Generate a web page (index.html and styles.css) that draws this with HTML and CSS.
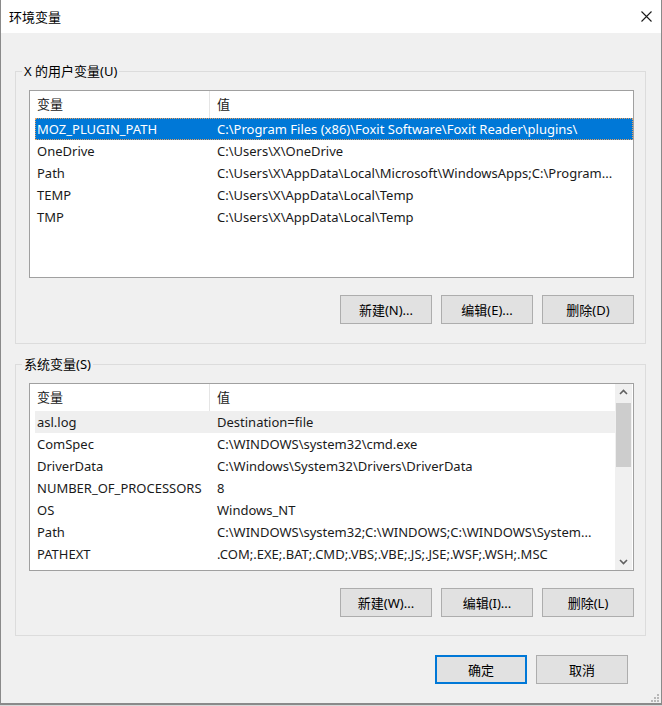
FILE: index.html
```html
<!DOCTYPE html>
<html lang="zh-CN">
<head>
<meta charset="utf-8">
<title>环境变量</title>
<link rel="stylesheet" href="styles.css">
</head>
<body>
<div class="window">
  <div class="titlebar">
    <span class="title">环境变量</span>
    <svg class="close" width="11" height="11" viewBox="0 0 11 11"><path d="M0.5 0.5 L10.5 10.5 M10.5 0.5 L0.5 10.5" stroke="#1a1a1a" stroke-width="1.1" fill="none"/></svg>
  </div>
  <div class="content">
    <fieldset class="group">
      <legend>X 的用户变量(U)</legend>
      <div class="list">
        <div class="header"><div class="hcell c1">变量</div><div class="hcell c2">值</div></div>
        <div class="rows">
          <div class="row selected"><div class="cell c1">MOZ_PLUGIN_PATH</div><div class="cell c2">C:\Program Files (x86)\Foxit Software\Foxit Reader\plugins\</div></div>
          <div class="row"><div class="cell c1">OneDrive</div><div class="cell c2">C:\Users\X\OneDrive</div></div>
          <div class="row"><div class="cell c1">Path</div><div class="cell c2">C:\Users\X\AppData\Local\Microsoft\WindowsApps;C:\Program...</div></div>
          <div class="row"><div class="cell c1">TEMP</div><div class="cell c2">C:\Users\X\AppData\Local\Temp</div></div>
          <div class="row"><div class="cell c1">TMP</div><div class="cell c2">C:\Users\X\AppData\Local\Temp</div></div>
        </div>
      </div>
      <div class="btnrow">
        <button class="btn">新建(N)...</button>
        <button class="btn">编辑(E)...</button>
        <button class="btn">删除(D)</button>
      </div>
    </fieldset>

    <fieldset class="group second">
      <legend>系统变量(S)</legend>
      <div class="list scrolling">
        <div class="listmain">
          <div class="header"><div class="hcell c1">变量</div><div class="hcell c2">值</div></div>
          <div class="rows">
            <div class="row hover"><div class="cell c1">asl.log</div><div class="cell c2">Destination=file</div></div>
            <div class="row"><div class="cell c1">ComSpec</div><div class="cell c2">C:\WINDOWS\system32\cmd.exe</div></div>
            <div class="row"><div class="cell c1">DriverData</div><div class="cell c2">C:\Windows\System32\Drivers\DriverData</div></div>
            <div class="row"><div class="cell c1">NUMBER_OF_PROCESSORS</div><div class="cell c2">8</div></div>
            <div class="row"><div class="cell c1">OS</div><div class="cell c2">Windows_NT</div></div>
            <div class="row"><div class="cell c1">Path</div><div class="cell c2">C:\WINDOWS\system32;C:\WINDOWS;C:\WINDOWS\System...</div></div>
            <div class="row"><div class="cell c1">PATHEXT</div><div class="cell c2">.COM;.EXE;.BAT;.CMD;.VBS;.VBE;.JS;.JSE;.WSF;.WSH;.MSC</div></div>
          </div>
        </div>
        <div class="scrollbar">
          <svg class="arrow" width="17" height="17" viewBox="0 0 17 17"><path d="M5 10 L8.5 6.5 L12 10" stroke="#606060" stroke-width="1.6" fill="none"/></svg>
          <div class="track"><div class="thumb"></div></div>
          <svg class="arrow" width="17" height="17" viewBox="0 0 17 17"><path d="M5 7 L8.5 10.5 L12 7" stroke="#606060" stroke-width="1.6" fill="none"/></svg>
        </div>
      </div>
      <div class="btnrow">
        <button class="btn">新建(W)...</button>
        <button class="btn">编辑(I)...</button>
        <button class="btn">删除(L)</button>
      </div>
    </fieldset>

    <div class="dialogbtns">
      <button class="btn default">确定</button>
      <button class="btn">取消</button>
    </div>
  </div>
  <svg class="grip" width="10" height="10" viewBox="0 0 10 10">
    <rect x="8" y="2" width="2" height="2" fill="#b8b8b8"/>
    <rect x="5" y="5" width="2" height="2" fill="#b8b8b8"/>
    <rect x="8" y="5" width="2" height="2" fill="#b8b8b8"/>
    <rect x="2" y="8" width="2" height="2" fill="#b8b8b8"/>
    <rect x="5" y="8" width="2" height="2" fill="#b8b8b8"/>
    <rect x="8" y="8" width="2" height="2" fill="#b8b8b8"/>
  </svg>
</div>
</body>
</html>
```

FILE: styles.css
```css
* { box-sizing: border-box; }
html, body { margin: 0; padding: 0; }
body {
  width: 662px;
  height: 706px;
  background: #d9d9d9;
  font-family: "Noto Sans", "Noto Sans CJK SC", sans-serif;
  font-size: 13px;
  color: #000;
  overflow: hidden;
}
.window {
  position: relative;
  width: 662px;
  height: 705px;
  background: #f0f0f0;
  border: 1px solid #8a8a8a;
  border-top: none;
  border-bottom-width: 2px;
}
.titlebar {
  height: 33px;
  background: #fff;
  display: flex;
  align-items: center;
  justify-content: space-between;
  padding: 0 9px 0 8px;
}
.title {
  font-size: 13px;
  font-family: "Noto Sans CJK SC", sans-serif;
  color: #000;
}
.close { display: block; }
.content {
  padding: 30px 0 0 14px;
}
.group {
  margin: 0;
  width: 631px;
  border: 1px solid #dcdcdc;
  padding: 11px 11px 19px 6px;
}
.group.second {
  margin-top: 12px;
  padding-bottom: 18px;
}
.group legend {
  padding: 0 2px;
  line-height: 16px;
  font-size: 13px;
}
.list {
  margin-left: 7px;
  height: 188px;
  background: #fff;
  border: 1px solid #a0a0a0;
}
.list.scrolling {
  display: flex;
}
.listmain {
  flex: 1;
  min-width: 0;
}
.header {
  height: 27px;
  display: flex;
  padding-left: 5px;
}
.hcell {
  line-height: 27px;
  color: #1a1a1a;
}
.hcell.c1 {
  width: 175px;
  padding-left: 2px;
  border-right: 1px solid #e5e5e5;
}
.hcell.c2 {
  padding-left: 7px;
}
.rows {
  padding-left: 5px;
}
.row {
  height: 22px;
  line-height: 23px;
  display: flex;
  white-space: nowrap;
  color: #1a1a1a;
}
.cell { overflow: hidden; }
.cell.c1 {
  width: 180px;
  flex: none;
  padding-left: 2px;
}
.cell.c2 {
  flex: 1;
  padding-left: 2px;
}
.row.selected {
  background: #0078d7;
  color: #fff;
  outline: 1px dotted #e8a060;
  outline-offset: -1px;
}
.row.hover {
  background: #efefef;
}
.scrollbar {
  width: 17px;
  flex: none;
  display: flex;
  flex-direction: column;
  background: #f0f0f0;
  margin-right: 1px;
}
.arrow { display: block; flex: none; }
.track {
  flex: 1;
  padding: 2px 1px 0;
}
.thumb {
  height: 64px;
  background: #cdcdcd;
}
.btnrow {
  display: flex;
  justify-content: flex-end;
  gap: 9px;
  margin-top: 17px;
}
.btn {
  width: 92px;
  height: 29px;
  margin: 0;
  padding: 0;
  background: #e1e1e1;
  border: 1px solid #adadad;
  font-family: "Noto Sans", "Noto Sans CJK SC", sans-serif;
  font-size: 13px;
  color: #000;
}
.btn.default {
  border: 2px solid #0078d7;
}
.dialogbtns {
  display: flex;
  justify-content: flex-end;
  gap: 9px;
  margin-top: 19px;
  padding-right: 33px;
}
.grip {
  position: absolute;
  right: 2px;
  bottom: 1px;
}
```
